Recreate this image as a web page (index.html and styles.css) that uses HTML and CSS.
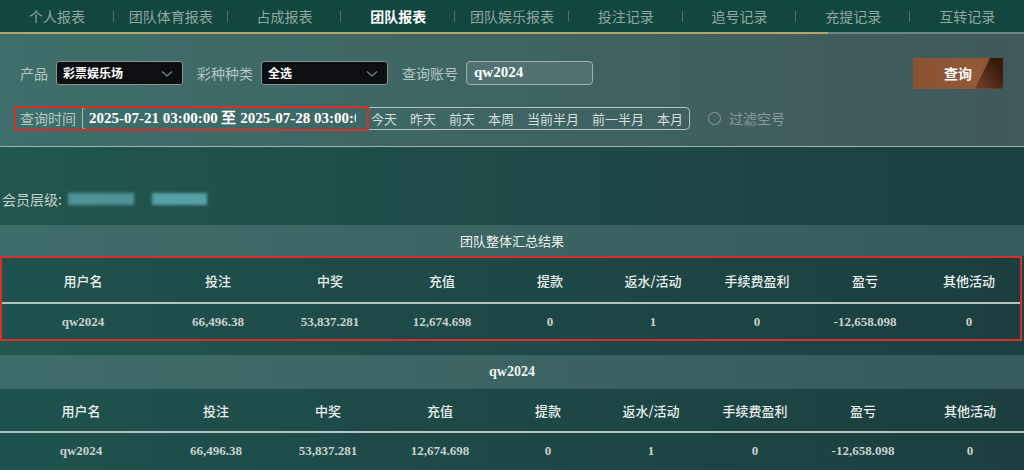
FILE: index.html
```html
<!DOCTYPE html>
<html lang="zh-CN">
<head>
    <meta charset="UTF-8">
    <title>团队报表</title>
    <link rel="stylesheet" href="styles.css">
</head>
<body>
    <!-- Report tabs -->
    <div class="tabs">
        <div class="tab">个人报表</div>
        <div class="tab">团队体育报表</div>
        <div class="tab">占成报表</div>
        <div class="tab active">团队报表</div>
        <div class="tab">团队娱乐报表</div>
        <div class="tab">投注记录</div>
        <div class="tab">追号记录</div>
        <div class="tab">充提记录</div>
        <div class="tab">互转记录</div>
    </div>

    <!-- Filter panel -->
    <div class="filters">
        <div class="filter-row">
            <span class="label">产品</span>
            <div class="select">彩票娱乐场
                <svg class="chevron" width="12" height="8" viewBox="0 0 12 8"><polyline points="1,1.5 6,6 11,1.5" fill="none" stroke="#7d8683" stroke-width="1.2"/></svg>
            </div>
            <span class="label gap">彩种种类</span>
            <div class="select">全选
                <svg class="chevron" width="12" height="8" viewBox="0 0 12 8"><polyline points="1,1.5 6,6 11,1.5" fill="none" stroke="#7d8683" stroke-width="1.2"/></svg>
            </div>
            <span class="label gap">查询账号</span>
            <div class="account">qw2024</div>
            <button class="btn-search">查询</button>
        </div>
        <div class="filter-row second">
            <div class="time-box">
                <span class="label">查询时间</span>
                <div class="date-input"><span>2025-07-21 03:00:00 至 2025-07-28 03:00:00</span></div>
            </div>
            <div class="quick">
                <span>今天</span>
                <span>昨天</span>
                <span>前天</span>
                <span>本周</span>
                <span>当前半月</span>
                <span>前一半月</span>
                <span>本月</span>
            </div>
            <span class="radio"></span>
            <span class="radio-text">过滤空号</span>
        </div>
    </div>

    <div class="member">
        会员层级:
        <span class="blur b1"></span>
        <span class="blur b2"></span>
    </div>

    <!-- Team summary -->
    <div class="table-title">团队整体汇总结果</div>
    <div class="report marked">
        <div class="row head">
            <div>用户名</div><div>投注</div><div>中奖</div><div>充值</div><div>提款</div><div>返水/活动</div><div>手续费盈利</div><div>盈亏</div><div>其他活动</div>
        </div>
        <div class="row data">
            <div>qw2024</div><div>66,496.38</div><div>53,837.281</div><div>12,674.698</div><div>0</div><div>1</div><div>0</div><div>-12,658.098</div><div>0</div>
        </div>
    </div>

    <div class="table-title user">qw2024</div>
    <div class="report">
        <div class="row head">
            <div>用户名</div><div>投注</div><div>中奖</div><div>充值</div><div>提款</div><div>返水/活动</div><div>手续费盈利</div><div>盈亏</div><div>其他活动</div>
        </div>
        <div class="row data">
            <div>qw2024</div><div>66,496.38</div><div>53,837.281</div><div>12,674.698</div><div>0</div><div>1</div><div>0</div><div>-12,658.098</div><div>0</div>
        </div>
    </div>
</body>
</html>
```

FILE: styles.css
```css
body {
    margin: 0;
    font-family: "Noto Sans CJK SC", "Noto Sans", sans-serif;
    font-size: 14px;
    background: linear-gradient(to right, #22564f, #1c3f40);
    color: #e6ecea;
    overflow: hidden;
}

/* Tabs */
.tabs {
    display: flex;
    height: 32px;
    background: #12463e;
    border-bottom: 2px solid;
    border-image: linear-gradient(to right, #b9a56c 80.8%, #6f8886 80.8%) 1;
}

.tab {
    flex: 1;
    position: relative;
    display: flex;
    align-items: center;
    justify-content: center;
    color: #8fa9a2;
    font-size: 14px;
}

.tab:not(:last-child)::after {
    content: "";
    position: absolute;
    right: 0;
    top: 11px;
    width: 1px;
    height: 11px;
    background: #4e736a;
}

.tab.active {
    color: #ffffff;
    font-weight: 700;
}

/* Filter panel */
.filters {
    height: 113px;
    background: linear-gradient(to right, #3e6f6a, #40595b);
    border-bottom: 1px solid #9fb4b1;
    box-sizing: border-box;
    padding-top: 24px;
}

.filter-row {
    display: flex;
    align-items: center;
    height: 30px;
    padding-left: 20px;
    padding-right: 21px;
}

.filter-row.second {
    margin-top: 17px;
    padding-left: 14px;
    height: 26px;
}

.label {
    color: #b3c8c2;
    font-size: 14px;
    margin-right: 8px;
}

.label.gap {
    margin-left: 14px;
}

.select {
    position: relative;
    width: 127px;
    height: 24px;
    box-sizing: border-box;
    background: #0d0f12;
    border: 1px solid #89938f;
    border-radius: 3px;
    color: #fff;
    font-size: 12px;
    font-weight: 700;
    line-height: 21px;
    padding-left: 6px;
}

.chevron {
    position: absolute;
    right: 9px;
    top: 8px;
}

.account {
    width: 127px;
    height: 24px;
    box-sizing: border-box;
    background: rgba(255, 255, 255, 0.09);
    border: 1px solid #9fb1ad;
    border-radius: 4px;
    color: #fff;
    font-family: "Liberation Serif", serif;
    font-weight: 700;
    font-size: 15px;
    line-height: 21px;
    padding-left: 7px;
}

.btn-search {
    position: relative;
    margin-left: auto;
    width: 90px;
    height: 31px;
    border: none;
    background: linear-gradient(to right, #8a5133, #925a39 75%, #7b4327);
    color: #fff;
    font-family: inherit;
    font-size: 14px;
    font-weight: 700;
    padding: 0;
    overflow: hidden;
}

.btn-search::after {
    content: "";
    position: absolute;
    right: 0;
    top: 0;
    width: 28px;
    height: 31px;
    background: linear-gradient(to bottom left, #361a0c 20%, #6b3b22 85%);
    clip-path: polygon(55% 0, 100% 0, 100% 100%, 0 100%);
}

.time-box {
    display: flex;
    align-items: center;
    height: 25px;
    box-sizing: border-box;
    border: 2px solid #d7302b;
    border-radius: 3px;
    padding-left: 4px;
    overflow: hidden;
}

.time-box .label {
    margin-right: 6px;
}

.date-input {
    width: 285px;
    height: 23px;
    box-sizing: border-box;
    border: 1px solid #a9bab6;
    border-right: none;
    border-radius: 4px 0 0 4px;
    padding-left: 6px;
    color: #fff;
    font-family: "Liberation Serif", serif;
    font-weight: 700;
    font-size: 15px;
    line-height: 21px;
}

.date-input span {
    display: block;
    width: 267px;
    white-space: nowrap;
    overflow: hidden;
}

.quick {
    display: flex;
    align-items: center;
    gap: 13px;
    height: 23px;
    box-sizing: border-box;
    border: 1px solid #b6c7c3;
    border-left: none;
    border-radius: 0 5px 5px 0;
    padding: 0 6px 0 2px;
    color: #d3dfdb;
    font-size: 13px;
}

.radio {
    width: 11px;
    height: 11px;
    border: 1.5px solid #8e9f9d;
    border-radius: 50%;
    margin-left: 18px;
}

.radio-text {
    margin-left: 8px;
    color: #8a9b9a;
    font-size: 14px;
}

/* Member level */
.member {
    display: flex;
    align-items: center;
    height: 78px;
    padding: 26px 0 0 2px;
    box-sizing: border-box;
    color: #c4d3cf;
    font-size: 14px;
}

.blur {
    display: inline-block;
    height: 12px;
    background: #4f9297;
    filter: blur(1.5px);
}

.b1 {
    width: 66px;
    margin-left: 6px;
}

.b2 {
    width: 55px;
    margin-left: 18px;
    background: #56a0a5;
}

/* Tables */
.table-title {
    height: 31px;
    line-height: 31px;
    text-align: center;
    background: linear-gradient(to right, #3f6d69, #375a5a);
    color: #eef3f1;
    font-size: 13px;
}

.table-title.user {
    height: 34px;
    line-height: 34px;
    margin-top: 14px;
    font-family: "Liberation Serif", serif;
    font-weight: 700;
    font-size: 14px;
}

.report {
    background: linear-gradient(to right, #1f524e, #1c3e3f);
}

.report.marked {
    border: 2px solid #d7302b;
    margin-right: 2px;
}

.row {
    display: grid;
    grid-template-columns: 162px 108px 116px 108px 108px 98px 110px 106px 1fr;
    align-items: center;
    text-align: center;
}

.row.head {
    height: 44px;
    border-bottom: 2px solid #b6c3c1;
    color: #e9efed;
    font-size: 13px;
    font-weight: 500;
}

.row.data {
    height: 35px;
    color: #c9d2cf;
    font-family: "Liberation Serif", serif;
    font-weight: 700;
    font-size: 13px;
}

.report:not(.marked) .row.head {
    height: 42px;
}
```
